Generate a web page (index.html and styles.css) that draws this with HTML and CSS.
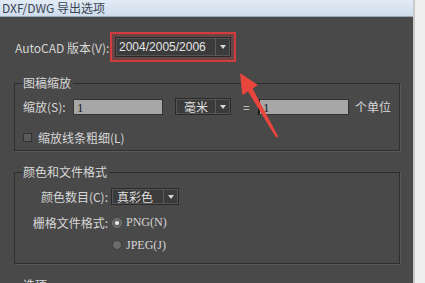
FILE: index.html
```html
<!doctype html>
<html lang="zh-CN">
<head>
    <meta charset="UTF-8">
    <title>DXF/DWG 导出选项</title>
    <link rel="stylesheet" href="styles.css">
</head>
<body>
<div class="app">
    <div class="main">
        <div class="titlebar">DXF/DWG 导出选项</div>
        <div class="body">
            <div class="edge"></div>
            <div class="panel">
                <div class="version-row">
                    <span class="version-label">AutoCAD 版本(V):</span>
                    <div class="select select-version highlight">
                        <span class="select-text">2004/2005/2006</span>
                        <span class="select-btn"></span>
                    </div>
                </div>

                <fieldset class="group">
                    <legend>图稿缩放</legend>
                    <div class="scale-row">
                        <span class="scale-label">缩放(S):</span>
                        <div class="input">1</div>
                        <div class="select select-unit">
                            <span class="select-text">毫米</span>
                            <span class="select-btn"></span>
                        </div>
                        <span class="equal">=</span>
                        <div class="input input-focus">1</div>
                        <span class="unit-text">个单位</span>
                    </div>
                    <label class="check-row">
                        <span class="checkbox"></span>
                        <span>缩放线条粗细(L)</span>
                    </label>
                </fieldset>

                <fieldset class="group group-format">
                    <legend>颜色和文件格式</legend>
                    <div class="form-grid">
                        <span class="grid-label">颜色数目(C):</span>
                        <div class="select select-color">
                            <span class="select-text">真彩色</span>
                            <span class="select-btn"></span>
                        </div>
                        <span class="grid-label row-png">栅格文件格式:</span>
                        <label class="radio-row row-png">
                            <span class="radio checked"></span>
                            <span>PNG(N)</span>
                        </label>
                        <span class="grid-label row-jpeg"></span>
                        <label class="radio-row row-jpeg">
                            <span class="radio"></span>
                            <span>JPEG(J)</span>
                        </label>
                    </div>
                </fieldset>

                <fieldset class="group group-options">
                    <legend>选项</legend>
                </fieldset>
            </div>
        </div>
    </div>
    <div class="side"></div>

    <!-- 标注箭头 -->
    <svg class="arrow" width="425" height="283" viewBox="0 0 425 283">
        <polygon points="240,73 257.9,85 252.6,88.6 278.2,136.6 276,137.6 248,91.6 242.4,95" fill="#e8453c"/>
    </svg>
</div>
</body>
</html>
```

FILE: styles.css
```css
* {
    margin: 0;
    padding: 0;
    box-sizing: border-box;
}

body {
    background: #eee;
    font-family: "Noto Sans CJK SC", "Liberation Sans", sans-serif;
    font-size: 12px;
}

.app {
    position: relative;
    width: 425px;
    height: 283px;
    overflow: hidden;
    display: flex;
}

.main {
    width: 413px;
    display: flex;
    flex-direction: column;
}

.titlebar {
    height: 17px;
    line-height: 16px;
    padding-left: 2px;
    color: #3a4452;
    font-size: 12px;
    background: linear-gradient(#e2ebf5, #cfdcec);
    border-bottom: 1px solid #9aa8b8;
}

.body {
    flex: 1;
    display: flex;
}

.edge {
    width: 2px;
    background: #6b7482;
}

.panel {
    flex: 1;
    background: #494949;
    padding: 20px 14px 0;
    color: #d6d6d6;
}

.version-row {
    display: flex;
    align-items: center;
    height: 20px;
}

.version-label {
    width: 101px;
    padding-left: 1px;
    white-space: nowrap;
}

.select {
    display: flex;
    align-items: center;
    background: #3b3b3b;
    border: 1px solid #2a2a2a;
    box-shadow: inset 0 0 0 1px #555;
    color: #dedede;
}

.select-text {
    flex: 1;
    padding-left: 6px;
    white-space: nowrap;
}

.select-btn {
    width: 15px;
    height: 100%;
    border-left: 1px solid #5c5c5c;
    display: flex;
    align-items: center;
    justify-content: center;
}

.select-btn::after {
    content: "";
    border-left: 3px solid transparent;
    border-right: 3px solid transparent;
    border-top: 4px solid #d8d8d8;
}

.select-version {
    width: 116px;
    height: 20px;
    font-family: "Liberation Sans", sans-serif;
    font-size: 12px;
    color: #e4e4e4;
}

.select-version .select-text {
    padding-left: 3px;
}

.highlight {
    outline: 2px solid #d23c3e;
    outline-offset: 3px;
    box-shadow: inset 0 0 0 1px #555, 0 0 0 5px rgba(210, 60, 62, 0.25);
}

.group {
    margin-top: 19px;
    padding: 0 8px 6px;
    border: 1px solid #2f2f2f;
    box-shadow: 1px 1px 0 #595959;
}

.group legend {
    padding: 0 2px 0 0;
    line-height: 14px;
    color: #d8d8d8;
}

.scale-row {
    display: flex;
    align-items: center;
    height: 17px;
    margin-top: 8px;
}

.scale-label {
    width: 50px;
    white-space: nowrap;
}

.input {
    width: 90px;
    height: 16px;
    line-height: 15px;
    padding-left: 3px;
    background: #a7a7a7;
    border: 1px solid #333;
    color: #1e1e1e;
    font-family: "Liberation Serif", serif;
    font-size: 13px;
}

.input-focus {
    width: 91px;
    margin-left: 9px;
    border-left: 2px solid #1a1a1a;
}

.select-unit {
    width: 56px;
    height: 17px;
    margin-left: 12px;
}

.select-unit .select-text {
    padding-left: 8px;
}

.equal {
    margin-left: 12px;
    width: 6px;
}

.unit-text {
    margin-left: 6px;
    white-space: nowrap;
}

.check-row {
    display: flex;
    align-items: center;
    gap: 6px;
    height: 14px;
    margin-top: 15px;
}

.checkbox {
    width: 9px;
    height: 9px;
    background: #5b5b5b;
    border: 1px solid #333;
}

.group-format {
    margin-top: 14px;
    padding-bottom: 11px;
}

.form-grid {
    display: grid;
    grid-template-columns: 85px auto;
    column-gap: 3px;
    align-items: center;
    justify-items: start;
    margin-top: 9px;
}

.grid-label {
    justify-self: end;
    white-space: nowrap;
}

.select-color {
    width: 68px;
    height: 17px;
}

.select-color .select-text {
    padding-left: 5px;
}

.row-png {
    margin-top: 9px;
}

.row-jpeg {
    margin-top: 7px;
}

.radio-row {
    display: flex;
    align-items: center;
    gap: 4px;
    height: 14px;
    margin-left: 1px;
    font-family: "Liberation Serif", "Noto Sans CJK SC", serif;
}

.radio {
    width: 10px;
    height: 10px;
    border-radius: 50%;
    background: #6a6a6a;
    border: 1px solid #3e3e3e;
    display: flex;
    align-items: center;
    justify-content: center;
}

.radio.checked {
    background: #626262;
    border-color: #7a7a7a;
}

.radio.checked::after {
    content: "";
    width: 4px;
    height: 4px;
    border-radius: 50%;
    background: #f0f0f0;
}

.group-options {
    margin-top: 14px;
    height: 30px;
}

.side {
    flex: 1;
    background: #eeeeee;
    border-left: 2px solid #c9c9c9;
}

.arrow {
    position: absolute;
    left: 0;
    top: 0;
    pointer-events: none;
}
```
